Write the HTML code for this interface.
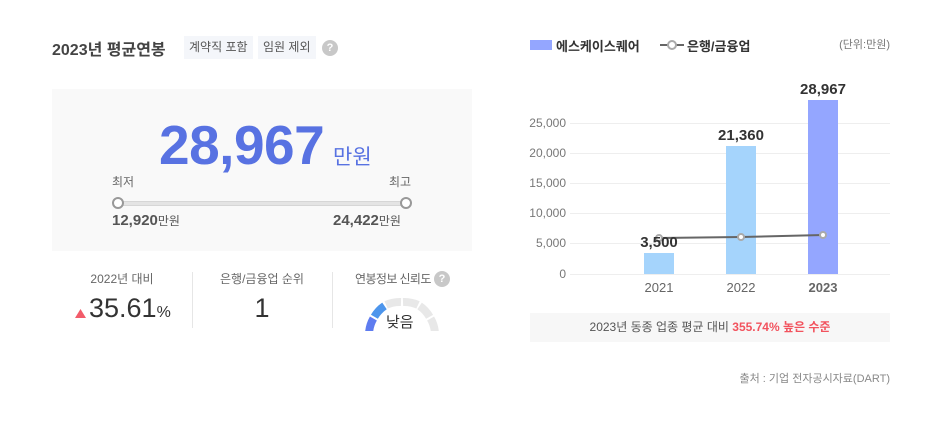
<!DOCTYPE html>
<html><head><meta charset="utf-8"><style>
*{margin:0;padding:0;box-sizing:border-box}
body{width:947px;height:430px;background:#fff;position:relative;overflow:hidden;font-family:"Liberation Sans","Noto Sans CJK KR",sans-serif;color:#333}
.a{position:absolute;white-space:nowrap}
.tag{position:absolute;top:36px;height:23px;background:#f4f6fa;color:#555;font-size:12px;line-height:23px;padding:0 5px}
.q{position:absolute;width:16px;height:16px;border-radius:50%;background:#c8c8c8;color:#fff;font-size:11px;font-weight:bold;text-align:center;line-height:16px}
.yl{position:absolute;right:381px;font-size:12px;color:#777;line-height:14px}
.gl{position:absolute;left:570px;width:320px;height:1px;background:#eee}
.bar{position:absolute;width:30px}
.bv{position:absolute;font-size:15px;font-weight:bold;color:#333;width:80px;text-align:center}
.xl{position:absolute;top:280px;width:60px;text-align:center;font-size:13px;color:#666}
</style></head><body>
<div class="a" style="left:52px;top:36px;font-size:16px;font-weight:bold;color:#444">2023년 평균연봉</div>
<div class="tag" style="left:184px">계약직 포함</div>
<div class="tag" style="left:258px">임원 제외</div>
<div class="q" style="left:322px;top:40px">?</div>

<div class="a" style="left:52px;top:89px;width:420px;height:162px;background:#f9f9f9"></div>
<div class="a" style="left:159px;top:113px;font-size:55px;font-weight:bold;color:#5872e2;letter-spacing:-0.5px">28,967</div>
<div class="a" style="left:333px;top:141px;font-size:21px;color:#5872e2">만원</div>
<div class="a" style="left:112px;top:173px;font-size:12px;color:#666">최저</div>
<div class="a" style="left:389px;top:173px;font-size:12px;color:#666">최고</div>
<div class="a" style="left:118px;top:201px;width:288px;height:5px;background:#e4e4e4;border:1px solid #d6d6d6"></div>
<div class="a" style="left:112px;top:197px;width:12px;height:12px;border-radius:50%;background:#fff;border:2px solid #999"></div>
<div class="a" style="left:400px;top:197px;width:12px;height:12px;border-radius:50%;background:#fff;border:2px solid #999"></div>
<div class="a" style="left:112px;top:212px;font-size:15px;font-weight:bold;color:#555">12,920<span style="font-size:12px;font-weight:normal">만원</span></div>
<div class="a" style="left:333px;top:212px;font-size:15px;font-weight:bold;color:#555">24,422<span style="font-size:12px;font-weight:normal">만원</span></div>

<div class="a" style="left:52px;top:270px;width:140px;text-align:center;font-size:12px;color:#666">2022년 대비</div>
<svg class="a" style="left:75px;top:309px" width="11" height="9"><polygon points="5.5,0 11,9 0,9" fill="#f25c6a"/></svg>
<div class="a" style="left:89px;top:293px;font-size:27px;color:#333">35.61<span style="font-size:16px">%</span></div>
<div class="a" style="left:192px;top:272px;width:1px;height:56px;background:#e6e6e6"></div>
<div class="a" style="left:192px;top:270px;width:140px;text-align:center;font-size:12px;color:#666">은행/금융업 순위</div>
<div class="a" style="left:192px;top:293px;width:140px;text-align:center;font-size:27px;color:#333">1</div>
<div class="a" style="left:332px;top:272px;width:1px;height:56px;background:#e6e6e6"></div>
<div class="a" style="left:355px;top:270px;font-size:12px;color:#666;letter-spacing:-0.6px">연봉정보 신뢰도</div>
<div class="q" style="left:434px;top:271px">?</div>
<svg class="a" style="left:360px;top:290px" width="90" height="41" viewBox="0 0 90 41">
<g fill="none" stroke-width="8">
<path d="M9 45 A33 33 0 0 1 13.4 28.5" stroke="#5e7cf0"/>
<path d="M14.4 26.8 A33 33 0 0 1 24.5 15.9" stroke="#4d95ec"/>
<path d="M26.1 14.9 A33 33 0 0 1 41 12" stroke="#e8e8e8"/>
<path d="M43 12 A33 33 0 0 1 58 14.9" stroke="#e8e8e8"/>
<path d="M59.6 15.9 A33 33 0 0 1 69.6 26.8" stroke="#e8e8e8"/>
<path d="M70.6 28.5 A33 33 0 0 1 75 45" stroke="#e8e8e8"/>
</g></svg>
<div class="a" style="left:386px;top:311px;font-size:15px;color:#333">낮음</div>

<div class="a" style="left:530px;top:40px;width:22px;height:10px;background:#94a6ff"></div>
<div class="a" style="left:556px;top:36px;font-size:13px;font-weight:bold;color:#333">에스케이스퀘어</div>
<svg class="a" style="left:660px;top:38px" width="24" height="14"><line x1="0" y1="7" x2="24" y2="7" stroke="#666" stroke-width="2"/><circle cx="12" cy="7" r="4" fill="#fff" stroke="#aaa" stroke-width="2"/></svg>
<div class="a" style="left:687px;top:36px;font-size:13px;font-weight:bold;color:#333">은행/금융업</div>
<div class="a" style="right:57px;top:36px;font-size:11px;color:#777">(단위:만원)</div>

<div class="gl" style="top:123px"></div><div class="gl" style="top:153px"></div><div class="gl" style="top:183px"></div><div class="gl" style="top:213px"></div><div class="gl" style="top:243px"></div><div class="gl" style="top:274px"></div>
<div class="yl" style="top:116px">25,000</div><div class="yl" style="top:146px">20,000</div><div class="yl" style="top:176px">15,000</div><div class="yl" style="top:206px">10,000</div><div class="yl" style="top:236px">5,000</div><div class="yl" style="top:267px">0</div>
<div class="bar" style="left:644px;top:253px;height:21px;background:#a5d4fc"></div>
<div class="bar" style="left:726px;top:146px;height:128px;background:#a5d4fc"></div>
<div class="bar" style="left:808px;top:100px;height:174px;background:#94a6ff"></div>
<svg class="a" style="left:0;top:0" width="947" height="430"><polyline points="659,238 741,237 823,235" fill="none" stroke="#666" stroke-width="2"/>
<circle cx="659" cy="238" r="3" fill="#fff" stroke="#aaa" stroke-width="2"/><circle cx="741" cy="237" r="3" fill="#fff" stroke="#aaa" stroke-width="2"/><circle cx="823" cy="235" r="3" fill="#fff" stroke="#aaa" stroke-width="2"/></svg>
<div class="bv" style="left:619px;top:234px">3,500</div>
<div class="bv" style="left:701px;top:127px">21,360</div>
<div class="bv" style="left:783px;top:81px">28,967</div>
<div class="xl" style="left:629px">2021</div>
<div class="xl" style="left:711px">2022</div>
<div class="xl" style="left:793px;font-weight:bold">2023</div>

<div class="a" style="left:530px;top:313px;width:360px;height:29px;background:#f7f7f7;text-align:center;font-size:12px;line-height:29px;color:#555">2023년 동종 업종 평균 대비 <b style="color:#f2535e">355.74% 높은 수준</b></div>
<div class="a" style="right:57px;top:370px;font-size:11px;color:#888">출처 : 기업 전자공시자료(DART)</div>
</body></html>
